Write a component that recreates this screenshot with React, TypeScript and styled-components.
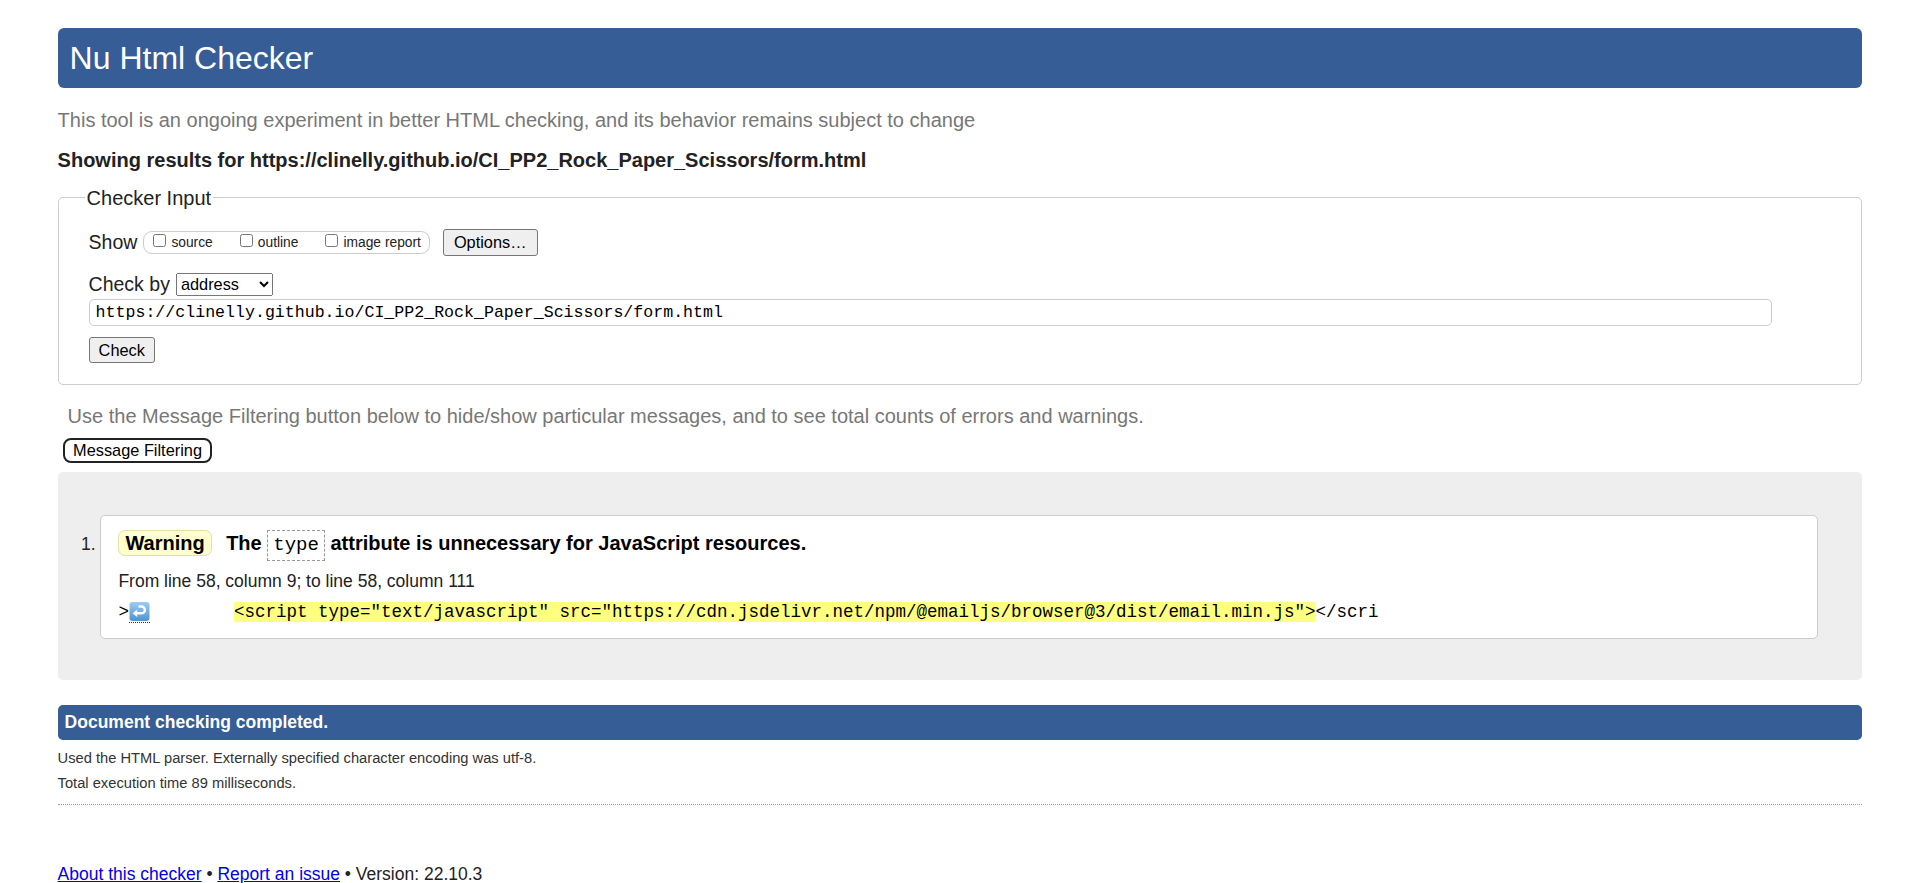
import React from "react";
import styled, { createGlobalStyle } from "styled-components";

const GlobalStyle = createGlobalStyle`
  html, body { margin: 0; padding: 0; background: #fff; }
  body {
    font-family: "Liberation Sans", Arial, sans-serif;
    color: #222;
  }
`;

const Page = styled.div`
  padding: 28px 3% 40px;
`;

const Heading = styled.h1`
  margin: 0;
  padding: 11.5px 12px;
  background: #365d95;
  color: #fff;
  font-weight: normal;
  font-size: 32px;
  line-height: 37px;
  border-radius: 6px;
`;

const Intro = styled.p`
  margin: 20px 0 0;
  font-size: 20px;
  line-height: 24px;
  color: #777;
`;

const Showing = styled.p`
  margin: 15.5px 0 0;
  font-size: 20px;
  line-height: 24px;
  font-weight: bold;
  color: #222;
`;

const Fieldset = styled.fieldset`
  margin: 14px 0 0;
  padding: 18.5px 14px 20.5px 30px;
  border: 1px solid #ccc;
  border-radius: 5px;
  min-width: 0;
`;

const Legend = styled.legend`
  margin-left: -4px;
  padding: 0 2px;
  font-size: 20px;
  line-height: 24px;
  color: #222;
`;

const Row = styled.div<{ $h: number; $mt: number }>`
  display: flex;
  align-items: center;
  height: ${(p) => p.$h}px;
  margin-top: ${(p) => p.$mt}px;
`;

const FieldLabel = styled.label`
  font-size: 19.5px;
  line-height: 23px;
  color: #222;
  margin-right: 6px;
`;

const CheckGroup = styled.span`
  display: inline-flex;
  align-items: center;
  height: 21px;
  padding: 0 8px 0 9px;
  border: 1px solid #ccc;
  border-radius: 9px;
  margin-right: 13px;
`;

const CheckItem = styled.label<{ $last?: boolean }>`
  display: inline-flex;
  align-items: center;
  font-size: 13.8px;
  color: #222;
  margin-right: ${(p) => (p.$last ? 0 : 27)}px;
`;

const CheckBox = styled.input`
  width: 13px;
  height: 13px;
  margin: 0 5px 3px 0;
`;

const NativeButton = styled.button`
  font-family: "Liberation Sans", Arial, sans-serif;
  font-size: 16.33px;
  line-height: 19px;
  padding: 3px 10px;
  background: #efefef;
  color: #000;
  border: 1px solid #767676;
  border-radius: 3px;
`;

const Select = styled.select`
  font-family: "Liberation Sans", Arial, sans-serif;
  font-size: 16.33px;
  width: 97px;
  height: 23px;
  color: #000;
`;

const UrlInput = styled.input`
  display: block;
  box-sizing: border-box;
  width: 95.7%;
  height: 27px;
  margin: 3.5px 0 0;
  padding: 0 6px;
  border: 1px solid #ccc;
  border-radius: 5px;
  font-family: "Liberation Mono", monospace;
  font-size: 16.6px;
  color: #000;
`;

const SubmitButton = styled(NativeButton)`
  display: block;
  margin-top: 11px;
  padding: 2.5px 9px;
`;

const FilterNote = styled.p`
  margin: 19px 0 0 10px;
  font-size: 20px;
  line-height: 24px;
  color: #777;
`;

const FilterButton = styled.button`
  display: block;
  margin: 10.5px 0 0 5px;
  padding: 1px 8.5px;
  font-family: "Liberation Sans", Arial, sans-serif;
  font-size: 16.33px;
  line-height: 19px;
  background: #fff;
  color: #000;
  border: 2px solid #222;
  border-radius: 8px;
`;

const Results = styled.div`
  margin-top: 8.5px;
  background: #eee;
  border-radius: 5px;
`;

const MessageList = styled.ol`
  margin: 0;
  padding: 43.5px 44.4px 40.5px 42.8px;
  font-size: 17.5px;
  color: #222;
`;

const Message = styled.li`
  background: #fff;
  border: 1px solid #ccc;
  border-radius: 5px;
  padding: 14px 17px 15.5px;
`;

const MessageTitle = styled.p`
  margin: 0;
  font-size: 20px;
  font-weight: bold;
  line-height: 26px;
  color: #000;
`;

const Badge = styled.strong`
  display: inline-block;
  line-height: 24px;
  padding: 0 6px;
  margin-right: 14.5px;
  background: #ffffcc;
  border: 1px solid #e3dfa5;
  border-radius: 7px;
`;

const AttrCode = styled.code`
  font-family: "Liberation Mono", monospace;
  font-weight: normal;
  font-size: 19px;
  padding: 3px 5px 4px;
  border: 1px dashed #999;
`;

const Location = styled.p`
  margin: 12.5px 0 0;
  font-size: 17.5px;
  line-height: 21px;
  color: #222;
`;

const Extract = styled.p`
  margin: 9px 0 0;
  font-family: "Liberation Mono", monospace;
  font-size: 17.5px;
  line-height: 22px;
  white-space: pre;
  color: #000;
`;

const LineBreak = styled.span`
  display: inline-block;
  vertical-align: -4px;
  border-bottom: 1px dotted #333;
  line-height: 0;
  padding-bottom: 1px;
`;

const Mark = styled.mark`
  background: #ffff80;
  color: #000;
`;

const DoneBar = styled.p`
  margin: 25px 0 0;
  padding: 7.5px 7px;
  background: #365d95;
  color: #fff;
  font-weight: bold;
  font-size: 17.5px;
  line-height: 20px;
  border-radius: 5px;
`;

const Detail = styled.p<{ $mt: number }>`
  margin: ${(p) => p.$mt}px 0 0;
  font-size: 14.7px;
  line-height: 17px;
  color: #333;
`;

const DottedRule = styled.hr`
  margin: 12px 0 0;
  border: 0;
  border-top: 1px dotted #999;
  height: 0;
`;

const Footer = styled.p`
  margin: 59px 0 0;
  font-size: 17.5px;
  line-height: 20px;
  color: #222;
`;

const FooterLink = styled.a`
  color: #0000ee;
  text-decoration: underline;
`;

function ReturnIcon() {
  return (
    <svg width="21" height="19" viewBox="0 0 21 19" aria-hidden="true">
      <defs>
        <linearGradient id="rg" x1="0" y1="0" x2="0" y2="1">
          <stop offset="0" stopColor="#9ccbf3" />
          <stop offset="1" stopColor="#4f93d2" />
        </linearGradient>
      </defs>
      <rect x="0.5" y="0" width="20" height="19" rx="3" fill="url(#rg)" />
      <path
        d="M9.5 4.5 H12.5 A3.4 3.4 0 0 1 12.5 11.3 H7.5"
        fill="none"
        stroke="#fff"
        strokeWidth="2.4"
      />
      <polygon points="3.6,11.3 8.2,7.6 8.2,15" fill="#fff" />
    </svg>
  );
}

export default function App() {
  return (
    <Page>
      <GlobalStyle />
      <Heading>Nu Html Checker</Heading>
      <Intro>
        This tool is an ongoing experiment in better HTML checking, and its behavior remains subject to change
      </Intro>
      <Showing>Showing results for https://clinelly.github.io/CI_PP2_Rock_Paper_Scissors/form.html</Showing>

      <Fieldset>
        <Legend>Checker Input</Legend>
        <Row $h={28} $mt={0}>
          <FieldLabel>Show</FieldLabel>
          <CheckGroup>
            <CheckItem>
              <CheckBox type="checkbox" />
              source
            </CheckItem>
            <CheckItem>
              <CheckBox type="checkbox" />
              outline
            </CheckItem>
            <CheckItem $last>
              <CheckBox type="checkbox" />
              image report
            </CheckItem>
          </CheckGroup>
          <NativeButton type="button">Options…</NativeButton>
        </Row>
        <Row $h={23} $mt={16.8}>
          <FieldLabel>Check by</FieldLabel>
          <Select defaultValue="address">
            <option value="address">address</option>
            <option value="file">file upload</option>
            <option value="text">text input</option>
          </Select>
        </Row>
        <UrlInput
          type="url"
          readOnly
          value="https://clinelly.github.io/CI_PP2_Rock_Paper_Scissors/form.html"
        />
        <SubmitButton type="button">Check</SubmitButton>
      </Fieldset>

      <FilterNote>
        Use the Message Filtering button below to hide/show particular messages, and to see total counts of errors and
        warnings.
      </FilterNote>
      <FilterButton type="button">Message Filtering</FilterButton>

      <Results>
        <MessageList>
          <Message>
            <MessageTitle>
              <Badge>Warning</Badge>The <AttrCode>type</AttrCode> attribute is unnecessary for JavaScript resources.
            </MessageTitle>
            <Location>From line 58, column 9; to line 58, column 111</Location>
            <Extract>
              {">"}
              <LineBreak title="Line break">
                <ReturnIcon />
              </LineBreak>
              {"        "}
              <Mark>{'<script type="text/javascript" src="https://cdn.jsdelivr.net/npm/@emailjs/browser@3/dist/email.min.js">'}</Mark>
              {"</scri"}
            </Extract>
          </Message>
        </MessageList>
      </Results>

      <DoneBar>Document checking completed.</DoneBar>
      <Detail $mt={10}>Used the HTML parser. Externally specified character encoding was utf-8.</Detail>
      <Detail $mt={8.7}>Total execution time 89 milliseconds.</Detail>
      <DottedRule />
      <Footer>
        <FooterLink href="#about">About this checker</FooterLink> • <FooterLink href="#issue">Report an issue</FooterLink> •
        Version: 22.10.3
      </Footer>
    </Page>
  );
}
